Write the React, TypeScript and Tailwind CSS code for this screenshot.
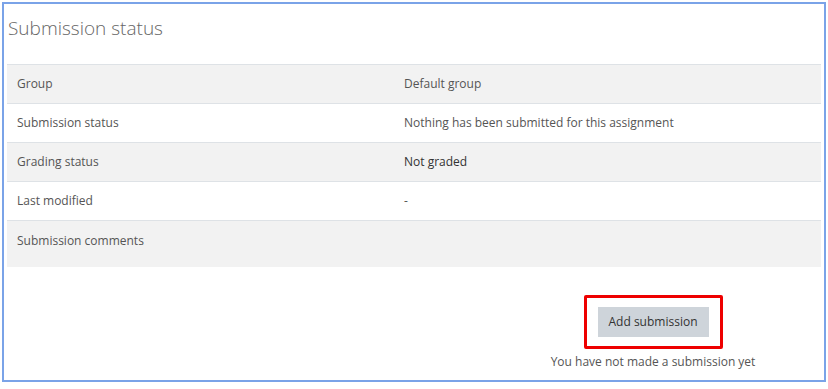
import React from "react";

interface RowProps {
  label: string;
  value: string;
  shaded: boolean;
  dark?: boolean;
  tall?: boolean;
}

const Row: React.FC<RowProps> = ({ label, value, shaded, dark, tall }) => {
  return (
    <div
      className={`flex border-t border-[#dee2e6] ${shaded ? "bg-[#f2f2f2]" : "bg-white"} ${tall ? "h-[47px] items-start pt-[11px]" : "h-[39px] items-center"}`}
    >
      <div className="w-[387px] pl-[10px] text-[#555]">{label}</div>
      <div className={`flex-1 pl-[10px] ${dark ? "text-[#333]" : "text-[#555]"}`}>{value}</div>
    </div>
  );
};

export default function App() {
  const rows = [
    { label: "Group", value: "Default group" },
    { label: "Submission status", value: "Nothing has been submitted for this assignment" },
    { label: "Grading status", value: "Not graded", dark: true },
    { label: "Last modified", value: "-" },
    { label: "Submission comments", value: "", tall: true },
  ];

  return (
    <div className="w-[828px] h-[389px] bg-white pt-[2px] pl-[2px]" style={{ fontFamily: '"Open Sans", "Noto Sans", sans-serif' }}>
      <div className="w-[824px] h-[380px] border-2 border-[#7aa3e8] flex flex-col">
        <h2 className="shrink-0 text-[19px] font-light text-[#666] pl-[4px] h-[60px] pt-[10px] leading-[28px]">Submission status</h2>
        <div className="shrink-0 mx-[3px] text-[12px]">
          {rows.map((r, i) => (
            <Row key={r.label} label={r.label} value={r.value} shaded={i % 2 === 0} dark={r.dark} tall={r.tall} />
          ))}
        </div>
        <div className="shrink-0 flex flex-col items-center ml-[549px] w-[200px] mt-[28px]">
          <div className="border-[3px] border-[#ee0000] rounded-[2px] px-[11px] py-[9px]">
            <button className="bg-[#ced4da] text-[#333] text-[12px] w-[111px] h-[30px]">Add submission</button>
          </div>
          <p className="whitespace-nowrap text-[12px] text-[#555] mt-[4px]">You have not made a submission yet</p>
        </div>
      </div>
    </div>
  );
}
